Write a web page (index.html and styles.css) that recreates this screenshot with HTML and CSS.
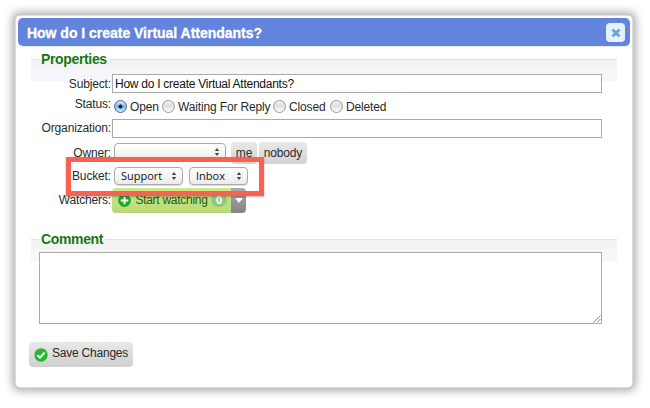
FILE: index.html
```
<!DOCTYPE html>
<html lang="en">
<head>
<meta charset="utf-8">
<title>How do I create Virtual Attendants?</title>
<link rel="stylesheet" href="styles.css">
</head>
<body>
<main class="dialog">
  <header class="titlebar">
    <h1>How do I create Virtual Attendants?</h1>
    <button class="close" aria-label="Close"><svg width="10" height="10" viewBox="0 0 10 10"><path d="M1.5 1.5 8.5 8.5M8.5 1.5 1.5 8.5" stroke="#68a8d8" stroke-width="2.8"/></svg></button>
  </header>
  <section class="group properties">
    <h2><span>Properties</span></h2>
    <div class="row subject"><label for="subject">Subject:</label><input id="subject" class="field" value="How do I create Virtual Attendants?"></div>
    <div class="row status"><span class="label">Status:</span>
      <div class="radios">
        <span class="option open"><i class="radio on"></i><span>Open</span></span>
        <span class="option waiting"><i class="radio"></i><span>Waiting For Reply</span></span>
        <span class="option closed"><i class="radio"></i><span>Closed</span></span>
        <span class="option"><i class="radio"></i><span>Deleted</span></span>
      </div>
    </div>
    <div class="row organization"><label for="org">Organization:</label><input id="org" class="field"></div>
    <div class="row owner"><span class="label">Owner:</span>
      <div class="select owner-select"><svg width="6" height="8" viewBox="0 0 6 8"><path d="M3 0 5.2 3H.8zM3 8 .8 5h4.4z" fill="#444"/></svg></div>
      <button class="btn me">me</button><button class="btn nobody">nobody</button>
    </div>
    <div class="row bucket"><span class="label">Bucket:</span>
      <div class="select support"><span>Support</span><svg width="6" height="8" viewBox="0 0 6 8"><path d="M3 0 5.2 3H.8zM3 8 .8 5h4.4z" fill="#444"/></svg></div>
      <div class="select inbox"><span>Inbox</span><svg width="6" height="8" viewBox="0 0 6 8"><path d="M3 0 5.2 3H.8zM3 8 .8 5h4.4z" fill="#444"/></svg></div>
      <div class="highlight"></div>
    </div>
    <div class="row watchers"><span class="label">Watchers:</span>
      <button class="watch"><svg width="13" height="13" viewBox="0 0 13 13"><circle cx="6.5" cy="6.5" r="6.4" fill="#20a629"/><path d="M6.5 2.7v7.6M2.7 6.5h7.6" stroke="#fff" stroke-width="2"/></svg><span class="watch-text">Start watching</span><span class="count">0</span></button>
      <button class="more" aria-label="More"><svg width="8" height="5" viewBox="0 0 8 5"><path d="M0 0h8L4 5z" fill="#fff"/></svg></button>
    </div>
  </section>
  <section class="group comment">
    <h2><span>Comment</span></h2>
    <textarea aria-label="Comment"></textarea>
    <svg class="grip" width="8" height="8" viewBox="0 0 8 8"><path d="M.5 7.5 7.5.5M4 7.5 7.5 4" stroke="#8a8a8a" fill="none"/></svg>
  </section>
  <button class="save"><svg width="14" height="14" viewBox="0 0 14 14"><defs><linearGradient id="g" x2="0" y2="1"><stop stop-color="#3aae3c"/><stop offset="1" stop-color="#12c322"/></linearGradient></defs><circle cx="7" cy="7" r="6.7" fill="url(#g)"/><path d="M3.4 7.2 6 9.6l4.6-5" stroke="#fff" stroke-width="2" fill="none"/></svg><span>Save Changes</span></button>
</main>
</body>
</html>
```
FILE: styles.css
```
* { box-sizing: border-box; }
body {
  margin: 0;
  width: 650px;
  height: 408px;
  overflow: hidden;
  padding: 16px;
  background: #fff;
  color: #2a2a2a;
  font: 12px/14px "Liberation Sans", Arial, sans-serif;
  letter-spacing: -.15px;
}
button { border: 0; padding: 0; margin: 0; font: inherit; color: inherit; letter-spacing: inherit; }
.dialog {
  width: 616px;
  height: 371px;
  padding: 2px;
  border-radius: 4px;
  background: #fff;
  box-shadow: 0 0 0 1px #dedede, 0 0 0 2px #c6c6c6, 0 0 8px 4px rgba(0, 0, 0, .32);
}
.titlebar {
  height: 28px;
  display: flex;
  align-items: center;
  justify-content: space-between;
  padding: 1px 5px 0 9px;
  border-radius: 5px;
  background: #6284dd;
  box-shadow: 0 1px 0 #e3e9fa;
}
h1 { margin: 0; color: #fff; font-size: 14px; line-height: 16px; font-weight: bold; letter-spacing: -.02px; -webkit-text-stroke: .3px #fff; }
.close {
  width: 19px;
  height: 19px;
  display: grid;
  place-items: center;
  border-radius: 4px;
  background: #e8f0fb;
}
.group {
  width: 586px;
  margin-left: 13px;
  position: relative;
  background: linear-gradient(#f3f3f3 0 9px, #f7f6fa 9px 21px, transparent 21px);
  border-top: 1px solid #e2e2e2;
}
.properties { height: 180px; margin-top: 13px; }
.comment { height: 103px; }
h2 { margin: -9px 0 0 8px; height: 16px; font-size: 14px; line-height: 16px; color: #177717; letter-spacing: -.35px; }
h2 span { display: inline-block; height: 16px; padding: 0 2px; background: linear-gradient(#fff 0 9px, transparent 9px); }
.row { display: flex; position: relative; }
.row > label, .label { width: 80px; text-align: right; flex: none; white-space: nowrap; }
.field {
  width: 490px;
  height: 19px;
  margin: 0 0 0 1px;
  padding: 0 2px;
  border: 1px solid #aaa;
  border-radius: 0;
  background: #fff;
  color: #111;
  font: inherit;
  letter-spacing: -.26px;
  outline: 0;
}
.subject { height: 23px; margin-top: 7px; }
.subject label { padding-top: 3px; }
.status { height: 22px; }
.radios { display: flex; padding: 1px 0 0 3px; height: 18px; }
.option { display: flex; align-items: center; gap: 3px; white-space: nowrap; }
.open { width: 48px; }
.waiting { width: 111px; }
.closed { width: 57px; }
.radio { width: 13px; height: 13px; border: 1px solid #989898; border-radius: 50%; background: linear-gradient(#f3f3f3, #ddd 45%, #fff); }
.radio.on { border-color: #486896; background: radial-gradient(circle, #13243c 0 1.8px, transparent 2.3px), linear-gradient(#d9eafa, #86b7ea 50%, #c8eeff); }
.organization { height: 23px; }
.organization label { padding-top: 2px; }
.owner { height: 25px; }
.owner .label { padding-top: 4px; }
.select {
  height: 18px;
  border: 1px solid #aaa;
  border-radius: 4px;
  background: linear-gradient(#fff, #f6f6f6 50%, #ebebeb);
  display: flex;
  align-items: center;
  justify-content: space-between;
  padding: 0 5px 0 6px;
  color: #111;
  font: 11px/14px "Open Sans", sans-serif;
  letter-spacing: 0;
  box-shadow: 0 1px 0 #ddd;
}
.owner-select { width: 112px; margin: 1px 5px 0 3px; justify-content: flex-end; }
.btn { height: 22px; border-radius: 4px; background: linear-gradient(#e8e8e8, #d3d3d3); }
.me { width: 26px; margin-right: 2px; }
.nobody { width: 48px; }
.bucket { height: 21px; }
.bucket .label { padding-top: 2px; }
.support { width: 69px; margin: 0 6px 0 3px; }
.inbox { width: 59px; }
.highlight { position: absolute; left: 35px; top: -10px; width: 198px; height: 39px; border: 5px solid #f9624f; box-shadow: 0 1px 2px rgba(0, 0, 0, .3); z-index: 2; }
.watchers { height: 25px; }
.watchers .label { padding-top: 5px; }
.watch {
  width: 119px;
  margin-left: 1px;
  height: 25px;
  border-radius: 4px 0 0 4px;
  background: linear-gradient(#cce98f, #b9d976);
  display: flex;
  align-items: center;
  padding-left: 6px;
  color: #285915;
  white-space: nowrap;
}
.watch-text { width: 73px; margin: -2px 3px 0 4px; letter-spacing: -.28px; }
.count { width: 16px; height: 14px; margin-top: -1px; border-radius: 7px; background: #96c879; color: #fff; font-weight: bold; text-align: center; font-size: 11px; }
.more { width: 15px; height: 25px; border-radius: 0 4px 4px 0; background: linear-gradient(#aaa, #848484); display: grid; place-items: center; }
textarea {
  display: block;
  width: 563px;
  height: 72px;
  margin: 5px 0 0 8px;
  border: 1px solid #aaa;
  border-radius: 0;
  resize: none;
  outline: 0;
  background: #fff;
}
.grip { position: absolute; left: 562px; top: 75px; }
.save {
  width: 104px;
  height: 25px;
  margin-left: 11px;
  display: flex;
  align-items: center;
  gap: 4px;
  padding-left: 5px;
  border-radius: 4px;
  background: linear-gradient(#e8e8e8, #d0d0d0);
  white-space: nowrap;
}
.save span { margin-top: -3px; letter-spacing: -.22px; }
```
